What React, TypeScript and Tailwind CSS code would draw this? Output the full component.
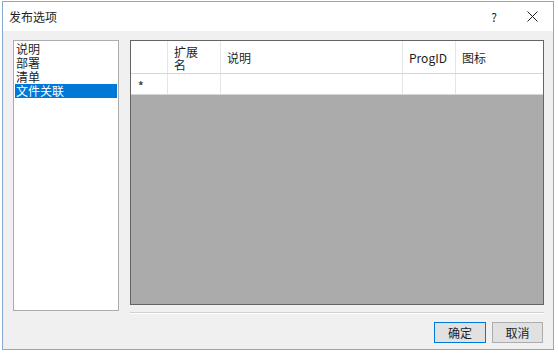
import { useState } from "react";

const PAGES = ["说明", "部署", "清单", "文件关联"];

const COLUMNS = [
  { key: "ext", label: "扩展名", width: "w-[53px]" },
  { key: "desc", label: "说明", width: "w-[182px]" },
  { key: "progid", label: "ProgID", width: "w-[53px]" },
  { key: "icon", label: "图标", width: "flex-1" },
];

const FONT = "font-['Segoe_UI','Noto_Sans_CJK_SC',sans-serif]";

export default function App() {
  const [active, setActive] = useState("文件关联");

  return (
    <div className={`w-[558px] h-[354px] bg-white ${FONT} text-[12px] text-[#1e1e1e]`}>
      {/* ── Dialog window ───────────────────────────── */}
      <div className="ml-[2px] mt-[1px] w-[552px] h-[349px] border border-[#86a9d2] flex flex-col">
        {/* Title bar */}
        <div className="h-[29px] shrink-0 bg-white flex items-center pl-[6px]">
          <span className="flex-1 leading-none">发布选项</span>
          <span className="w-[20px] text-center text-[12px] mr-[23px]">?</span>
          <svg width="11" height="11" viewBox="0 0 11 11" className="mr-[15px]">
            <path d="M0.5 0.5 L10.5 10.5 M10.5 0.5 L0.5 10.5" stroke="#1e1e1e" strokeWidth="1" />
          </svg>
        </div>

        {/* Body */}
        <div className="flex-1 bg-[#f0f0f0] flex gap-[11px] pl-[10px] pr-[9px] pt-[9px]">
          {/* Page list */}
          <div className="w-[106px] h-[271px] bg-white border border-[#acacac] p-[1px]">
            {PAGES.map((p) => (
              <div
                key={p}
                onClick={() => setActive(p)}
                className={`h-[14px] leading-[14px] pl-[1px] cursor-default ${
                  active === p ? "bg-[#0078d7] text-white" : ""
                }`}
              >
                {p}
              </div>
            ))}
          </div>

          {/* Grid + buttons */}
          <div className="flex-1 flex flex-col">
            <div className="h-[265px] border border-[#646464] bg-[#ababab] flex flex-col">
              {/* Header row */}
              <div className="h-[33px] bg-white flex border-b border-[#d5d5d5]">
                <div className="w-[37px] border-r border-[#e5e5e5]" />
                {COLUMNS.map((c, i) => (
                  <div
                    key={c.key}
                    className={`${c.width} flex items-center pl-[6px] leading-[13px] ${
                      i < COLUMNS.length - 1 ? "border-r border-[#e5e5e5]" : ""
                    }`}
                  >
                    {c.key === "ext" ? (
                      <span className="pt-[2px]">
                        扩展
                        <br />名
                      </span>
                    ) : (
                      c.label
                    )}
                  </div>
                ))}
              </div>
              {/* New row */}
              <div className="h-[21px] bg-white flex border-b border-[#d5d5d5]">
                <div className="w-[37px] border-r border-[#e5e5e5] flex items-center pl-[7px] pt-[3px] text-[11px] font-bold text-[#444]">
                  *
                </div>
                {COLUMNS.map((c, i) => (
                  <div
                    key={c.key}
                    className={`${c.width} ${i < COLUMNS.length - 1 ? "border-r border-[#e5e5e5]" : ""}`}
                  />
                ))}
              </div>
            </div>

            {/* Separator */}
            <div className="mt-[7px] h-[2px] border-t border-[#d0d0d0] border-b border-b-white" />

            {/* Buttons */}
            <div className="mt-[8px] flex justify-end gap-[6px] pr-[1px]">
              <button className="w-[52px] h-[21px] bg-[#e1e1e1] border border-[#0078d7] leading-none">
                确定
              </button>
              <button className="w-[51px] h-[21px] bg-[#e1e1e1] border border-[#adadad] leading-none">
                取消
              </button>
            </div>
          </div>
        </div>
      </div>
    </div>
  );
}
